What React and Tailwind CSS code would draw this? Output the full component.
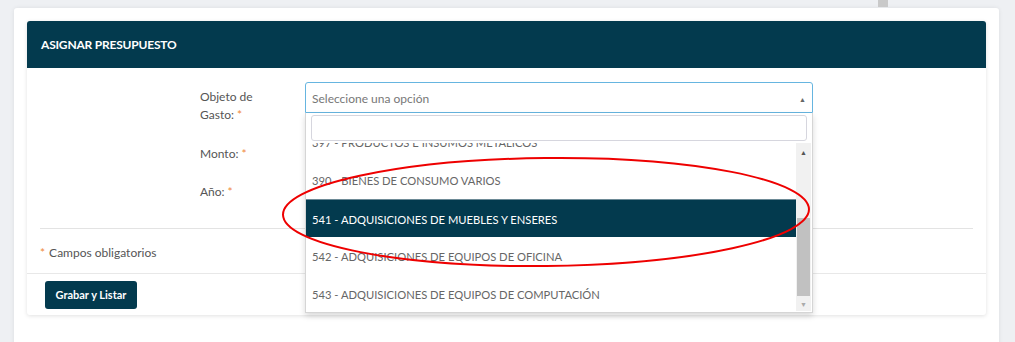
import React from "react";

const font = { fontFamily: "Lato, 'Open Sans', sans-serif" };

function Star() {
  return <span className="text-[#f0883a] ml-[3px]">*</span>;
}

export default function App() {
  const options = [
    "397 - PRODUCTOS E INSUMOS METALICOS",
    "390 - BIENES DE CONSUMO VARIOS",
    "541 - ADQUISICIONES DE MUEBLES Y ENSERES",
    "542 - ADQUISICIONES DE EQUIPOS DE OFICINA",
    "543 - ADQUISICIONES DE EQUIPOS DE COMPUTACIÓN",
  ];
  return (
    <div className="w-[1015px] h-[342px] bg-[#eef0f3] relative overflow-hidden" style={font}>
      <div className="absolute left-[878px] top-0 w-[10px] h-[7px] bg-[#c9c9c9]" />
      <div className="pt-[8px] pl-[14px]">
        <div className="w-[985px] h-[340px] bg-white rounded-[3px] shadow-[0_0_4px_rgba(0,0,0,0.08)] p-[13px]">
          <div className="w-[959px] bg-white rounded-[3px] shadow-[0_1px_4px_rgba(0,0,0,0.12)] relative">
            <div className="h-[47px] bg-[#033a4e] rounded-t-[3px] flex items-center pl-[14px] text-white font-bold text-[12px] tracking-[-0.2px]">
              ASIGNAR PRESUPUESTO
            </div>
            <div className="px-[13px] text-[12px] text-[#555]">
              <div className="flex pt-[14px] h-[64px]">
                <div className="w-[160px]" />
                <div className="w-[105px] leading-[18px] pt-[6px]">
                  Objeto de<br />Gasto:<Star />
                </div>
                <div className="w-[508px] h-[31px] border border-[#66b5e0] rounded-t-[3px] flex items-center justify-between px-[6px] pt-[3px] text-[#777]">
                  <span>Seleccione una opción</span>
                  <span className="text-[7px] text-[#666]">▲</span>
                </div>
              </div>
              <div className="flex h-[38px] items-center pt-[5px]">
                <div className="w-[160px]" />
                <div className="w-[105px]">Monto:<Star /></div>
                <div className="w-[508px] h-[31px] border border-[#ccc] rounded-[3px]" />
              </div>
              <div className="flex h-[37px] items-center pt-[7px]">
                <div className="w-[160px]" />
                <div className="w-[105px]">Año:<Star /></div>
                <div className="w-[508px] h-[31px] border border-[#ccc] rounded-[3px]" />
              </div>
              <div className="mt-[21px] border-t border-[#e3e3e3]" />
              <div className="h-[44px] flex items-center pt-[3px] text-[#555]">
                <span className="text-[#f0883a] mr-[4px]">*</span>Campos obligatorios
              </div>
            </div>
            <div className="border-t border-[#e8e8e8] px-[18px] pt-[7px] pb-[6px]">
              <button className="w-[92px] h-[28px] bg-[#033a4e] rounded-[3px] text-white font-bold text-[11px]">
                Grabar y Listar
              </button>
            </div>
          </div>
        </div>
      </div>

      {/* dropdown */}
      <div className="absolute left-[305px] top-[113px] w-[508px] h-[200px] bg-white border border-[#d5d5d5] border-t-0 shadow-[0_3px_6px_rgba(0,0,0,0.15)] text-[11.2px] text-[#666]">
        <div className="px-[5px] pt-[2px]">
          <div className="h-[26px] border border-[#d6d6de] rounded-[3px]" />
        </div>
        <div className="relative h-[168px] mt-[2px] overflow-hidden">
          <div className="mt-[-20px] mr-[15px]">
            {options.map((o, i) => (
              <div
                key={o}
                className={
                  "h-[38px] flex items-center pl-[6px] pt-[3px] " +
                  (i === 2 ? "bg-[#033a4e] text-white border-t border-[#6d8a96]" : "")
                }
              >
                {o}
              </div>
            ))}
          </div>
          <div className="absolute right-[1px] top-0 bottom-0 w-[15px] bg-[#f1f1f1] flex flex-col items-center">
            <span className="text-[7px] text-[#555] leading-none mt-[6px]">▲</span>
            <div className="w-[13px] h-[78px] bg-[#c1c1c1] mt-[62px]" />
            <span className="text-[7px] text-[#aaa] leading-none mt-[5px]">▼</span>
          </div>
        </div>
      </div>

      {/* annotation ellipse */}
      <svg className="absolute left-0 top-0" width="1015" height="342">
        <ellipse cx="546" cy="212" rx="263" ry="54" fill="none" stroke="#ee0000" strokeWidth="2" transform="rotate(-0.6 546 212)" />
      </svg>
    </div>
  );
}
